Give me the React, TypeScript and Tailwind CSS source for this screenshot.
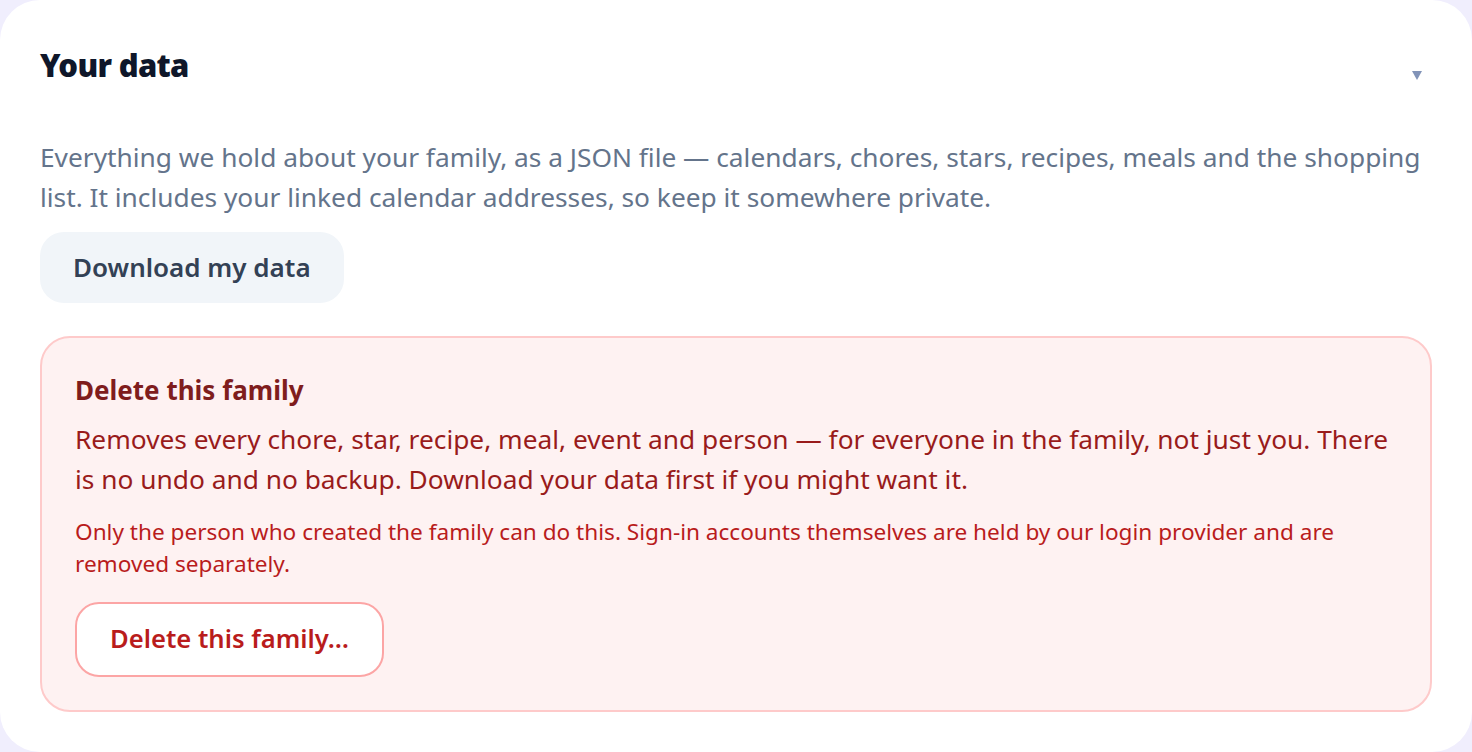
const FONT = "font-['Noto_Sans','Open_Sans',sans-serif]";

export default function App() {
  return (
    <div className={`min-h-screen bg-[#f0eefd] ${FONT}`}>
      <section className="h-[752px] rounded-[40px] bg-white px-10 pt-[38px]">
        {/* Header */}
        <div className="flex items-start justify-between">
          <h2 className="text-[31px] font-black leading-[54px] tracking-[-0.7px] text-[#0f172a]">
            Your data
          </h2>
          <svg className="mr-[10px] mt-[33px]" width="10" height="9" viewBox="0 0 10 9">
            <polygon points="0,0 10,0 5,9" fill="#8193b8" />
          </svg>
        </div>

        {/* Export */}
        <p className="mt-[45px] text-[26.3px] leading-[40px] text-[#64748b]">
          Everything we hold about your family, as a JSON file — calendars, chores, stars, recipes, meals and the
          shopping list. It includes your linked calendar addresses, so keep it somewhere private.
        </p>
        <button className="mt-[15px] h-[71px] rounded-[24px] bg-[#f1f5f9] px-[33px] text-[26px] font-semibold text-[#334155]">
          Download my data
        </button>

        {/* Danger zone */}
        <div className="mt-[33px] rounded-[30px] border-2 border-[#fecaca] bg-[#fef2f2] px-[33px] pb-[33px] pt-[32px]">
          <h3 className="text-[26px] font-bold leading-[40px] text-[#7f1d1d]">Delete this family</h3>
          <p className="mt-[9px] text-[26.3px] leading-[40px] text-[#991b1b]">
            Removes every chore, star, recipe, meal, event and person — for everyone in the family, not just you. There
            is no undo and no backup. Download your data first if you might want it.
          </p>
          <p className="mt-[17px] text-[22.6px] leading-[32px] text-[#b91c1c]">
            Only the person who created the family can do this. Sign-in accounts themselves are held by our login
            provider and are removed separately.
          </p>
          <button className="mt-[22px] h-[75px] rounded-[24px] border-2 border-[#fca5a5] bg-white px-[33px] text-[25.6px] font-semibold text-[#b91c1c]">
            Delete this family…
          </button>
        </div>
      </section>
    </div>
  );
}
